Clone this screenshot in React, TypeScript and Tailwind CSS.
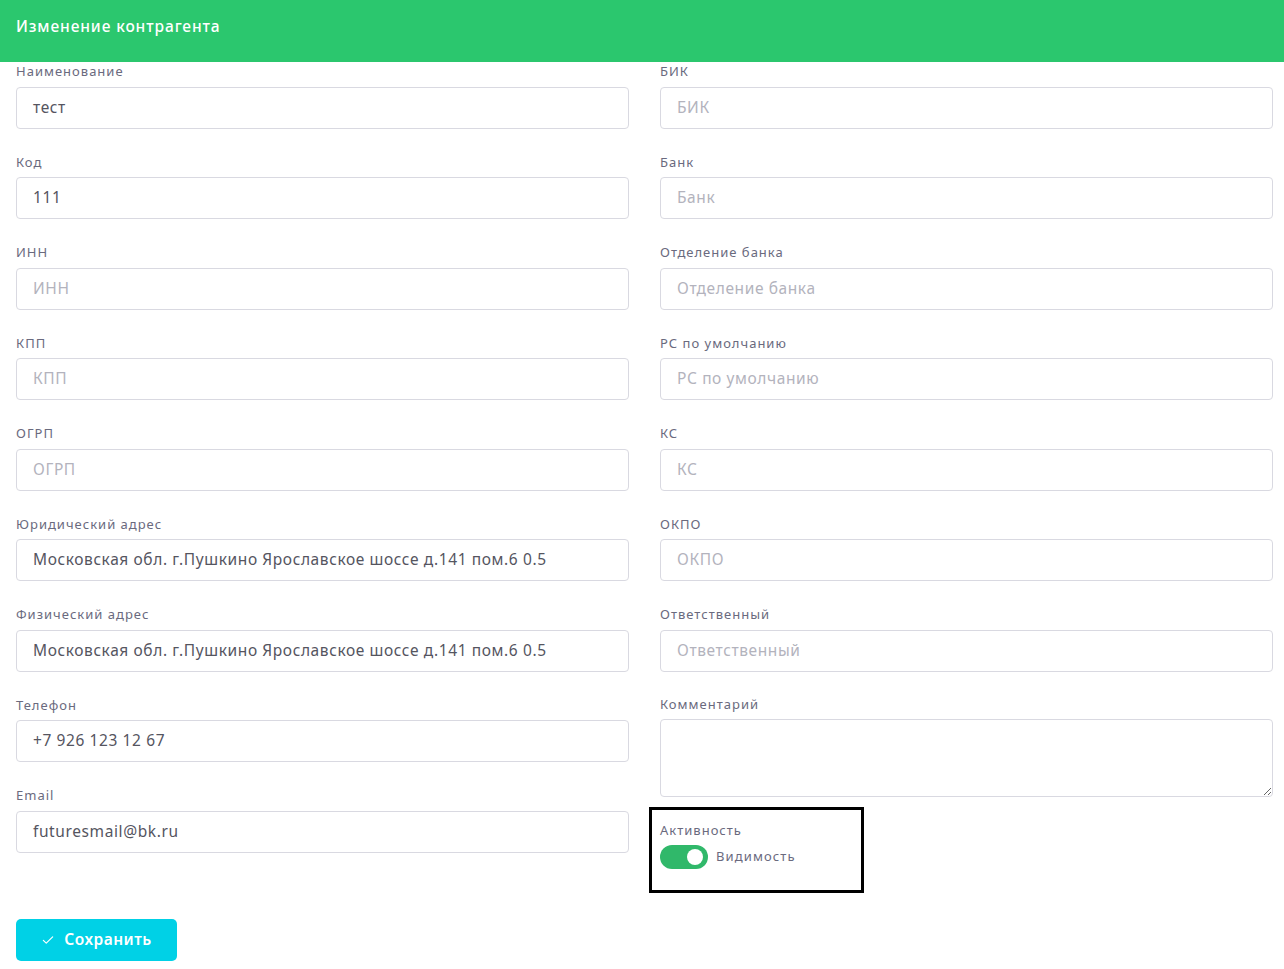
import type { FC } from "react";

interface Field {
	label: string;
	value?: string;
}

const left: Field[] = [
	{ label: "Наименование", value: "тест" },
	{ label: "Код", value: "111" },
	{ label: "ИНН" },
	{ label: "КПП" },
	{ label: "ОГРП" },
	{ label: "Юридический адрес", value: "Московская обл. г.Пушкино Ярославское шоссе д.141 пом.6 0.5" },
	{ label: "Физический адрес", value: "Московская обл. г.Пушкино Ярославское шоссе д.141 пом.6 0.5" },
	{ label: "Телефон", value: "+7 926 123 12 67" },
	{ label: "Email", value: "futuresmail@bk.ru" }
];

const right: Field[] = [
	{ label: "БИК" },
	{ label: "Банк" },
	{ label: "Отделение банка" },
	{ label: "РС по умолчанию" },
	{ label: "КС" },
	{ label: "ОКПО" },
	{ label: "Ответственный" }
];

const Label: FC<{ text: string }> = ({ text }) => (
	<div className="h-[16px] mb-[7.5px] text-[13px] leading-[16px] tracking-[1px] text-[#6a6a7e]">{text}</div>
);

const Input: FC<Field> = ({ label, value }) => (
	<div className="mb-[25px]">
		<Label text={label} />
		<div className="h-[42px] border border-[#d9d9e1] rounded-[4px] px-[16px] flex items-center text-[15.5px] tracking-[0.6px]">
			{value ? <span className="text-[#55555f]">{value}</span> : <span className="text-[#b3b3bd]">{label}</span>}
		</div>
	</div>
);

const App: FC = () => (
	<div className="w-[1284px] h-[969px] bg-white overflow-hidden" style={{ fontFamily: '"Noto Sans", sans-serif' }}>
		<div className="h-[62px] bg-[#2bc76e] px-[16px] pt-[16px]">
			<h1 className="text-white text-[15.5px] font-medium leading-[20px] tracking-[0.9px]">Изменение контрагента</h1>
		</div>
		<div className="pl-[16px] pr-[11px] pt-px grid grid-cols-2 gap-x-[31px]">
			<div>
				{left.map((f) => (
					<Input key={f.label} {...f} />
				))}
			</div>
			<div>
				{right.map((f) => (
					<Input key={f.label} {...f} />
				))}
				<div className="-mt-[1px]">
					<Label text="Комментарий" />
				</div>
				<textarea className="block w-full h-[78px] border border-[#d9d9e1] rounded-[4px] resize-y outline-none" />
				<div className="mt-[10px] -ml-[11px] w-[215px] h-[86px] border-[3px] border-black px-[8px] pt-[12px]">
					<div className="text-[13px] leading-[16px] tracking-[1px] text-[#6a6a7e]">Активность</div>
					<div className="mt-[7px] flex items-center gap-[8px]">
						<div className="w-[48px] h-[24px] rounded-full bg-[#30b86a] flex items-center justify-end pr-[5px]">
							<div className="w-[16px] h-[16px] rounded-full bg-white" />
						</div>
						<span className="text-[13px] tracking-[1.1px] text-[#6a6a7e]">Видимость</span>
					</div>
				</div>
			</div>
		</div>
		<div className="pl-[16px] mt-[26px]">
			<button className="w-[161px] h-[42px] rounded-[5px] bg-[#00d1e6] text-white flex items-center justify-center gap-[9px] text-[15.5px] font-semibold tracking-[0.5px]">
				<svg width="14" height="14" viewBox="0 0 24 24" fill="none" stroke="currentColor" strokeWidth="2" strokeLinecap="round" strokeLinejoin="round">
					<path d="M4 12.5l5 5L20 6.5" />
				</svg>
				Сохранить
			</button>
		</div>
	</div>
);

export default App;
